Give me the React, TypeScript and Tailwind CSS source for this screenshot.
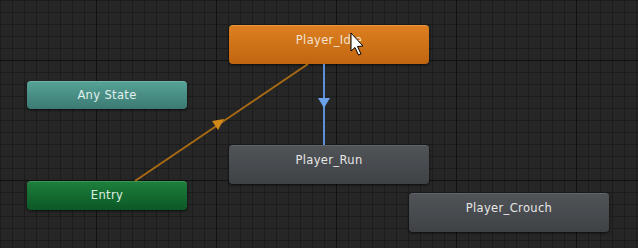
import React from "react";

function Node({ label, className, top, left, w, h }: { label: string; className: string; top: number; left: number; w: number; h: number }) {
  return (
    <div
      className={`absolute rounded-[4px] flex justify-center text-[11.5px] tracking-[0.35px] leading-none shadow-[0_1px_3px_rgba(0,0,0,0.7)] ${className}`}
      style={{ top, left, width: w, height: h }}
    >
      {label}
    </div>
  );
}

export default function App() {
  return (
    <div className="relative w-[638px] h-[248px] overflow-hidden bg-[#262626] font-['DejaVu_Sans',sans-serif]">
      <svg className="absolute inset-0" width="638" height="248">
        <defs>
          <pattern id="minor" width="12" height="12" patternUnits="userSpaceOnUse">
            <path d="M 0.5 0 V 12 M 0 0.5 H 12" stroke="#1c1c1c" strokeWidth="1" fill="none" />
          </pattern>
          <pattern id="major" x="96" y="60" width="120" height="120" patternUnits="userSpaceOnUse">
            <path d="M 0.5 0 V 120 M 0 0.5 H 120" stroke="#121212" strokeWidth="1" fill="none" />
          </pattern>
        </defs>
        <rect width="638" height="248" fill="url(#minor)" />
        <rect width="638" height="248" fill="url(#major)" />
      </svg>

      <Node label="Player_Idle" top={25} left={229} w={200} h={39} className="pt-[9px] text-[#f3e2cf] bg-gradient-to-b from-[#dd7f20] to-[#c0660f] border-t border-[#e8993f]" />
      <Node label="Any State" top={81} left={27} w={160} h={28} className="items-center text-[#e0f0ec] bg-gradient-to-b from-[#56a196] to-[#3b7a72] border-t border-[#72b5aa]" />
      <Node label="Entry" top={181} left={27} w={160} h={29} className="items-center text-[#dff0e2] bg-gradient-to-b from-[#1d7f3c] to-[#0c5726] border-t border-[#3a9556]" />
      <Node label="Player_Run" top={145} left={229} w={200} h={39} className="pt-[9px] text-[#e6e6e6] bg-gradient-to-b from-[#505357] to-[#3f4245] border-t border-[#62656a]" />
      <Node label="Player_Crouch" top={193} left={409} w={200} h={39} className="pt-[9px] text-[#e6e6e6] bg-gradient-to-b from-[#505357] to-[#3f4245] border-t border-[#62656a]" />

      <svg className="absolute inset-0 pointer-events-none" width="638" height="248">
        <line x1="135" y1="181" x2="308" y2="64" stroke="#a86a12" strokeWidth="2" />
        <polygon points="224,119 212,121 218,130" fill="#d18a1a" />
        <line x1="324" y1="64" x2="324" y2="145" stroke="#5b8fd6" strokeWidth="2" />
        <polygon points="318,98 330,98 324,108" fill="#6aa2ea" />
        <path d="M351 33 L351 51 L355 47.5 L358.5 55 L361 54 L357.5 46.5 L363 46 Z" fill="#ffffff" stroke="#000000" strokeWidth="1" strokeLinejoin="round" />
      </svg>
    </div>
  );
}
